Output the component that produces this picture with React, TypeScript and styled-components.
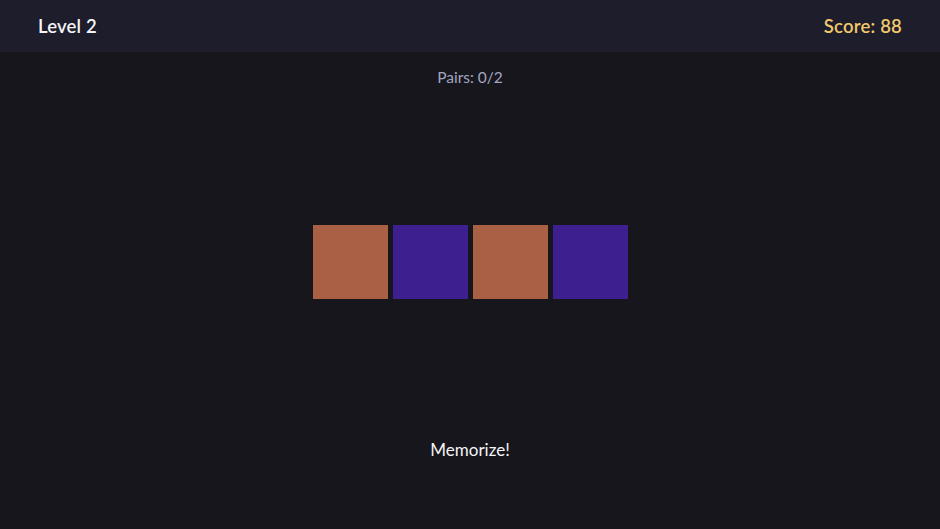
import React from 'react';
import styled, { createGlobalStyle } from 'styled-components';

const GlobalStyle = createGlobalStyle`
  html, body {
    margin: 0;
    padding: 0;
    background: #17161c;
  }
  body {
    font-family: 'Lato', 'Noto Sans', sans-serif;
  }
`;

const Page = styled.div`
  display: flex;
  flex-direction: column;
  height: 529px;
  background: #17161c;
`;

const Header = styled.header`
  display: flex;
  align-items: center;
  justify-content: space-between;
  height: 52px;
  padding: 0 38px;
  background: #1d1d2b;
`;

const HeaderText = styled.div<{ $accent?: boolean }>`
  font-size: 18.5px;
  font-weight: 600;
  letter-spacing: 0.2px;
  color: ${(p) => (p.$accent ? '#f2c86c' : '#f4f4f6')};
`;

const Main = styled.main`
  display: flex;
  flex-direction: column;
  align-items: center;
  flex: 1;
`;

const Pairs = styled.div`
  margin-top: 15px;
  line-height: 20px;
  font-size: 15.5px;
  color: #a3a6c4;
`;

const Board = styled.div`
  display: grid;
  grid-template-columns: repeat(4, 75px);
  gap: 5px;
  margin-top: 138px;
`;

const Tile = styled.div<{ $color: string }>`
  height: 74px;
  background: ${(p) => p.$color};
`;

const Message = styled.div`
  margin-top: 140px;
  line-height: 22px;
  font-size: 17px;
  color: #f4f4f6;
`;

const tiles = ['#a96044', '#3e1f8f', '#a96044', '#3e1f8f'];

export default function App() {
  return (
    <Page>
      <GlobalStyle />
      <Header>
        <HeaderText>Level 2</HeaderText>
        <HeaderText $accent>Score: 88</HeaderText>
      </Header>
      <Main>
        <Pairs>Pairs: 0/2</Pairs>
        <Board>
          {tiles.map((c, i) => (
            <Tile key={i} $color={c} />
          ))}
        </Board>
        <Message>Memorize!</Message>
      </Main>
    </Page>
  );
}
